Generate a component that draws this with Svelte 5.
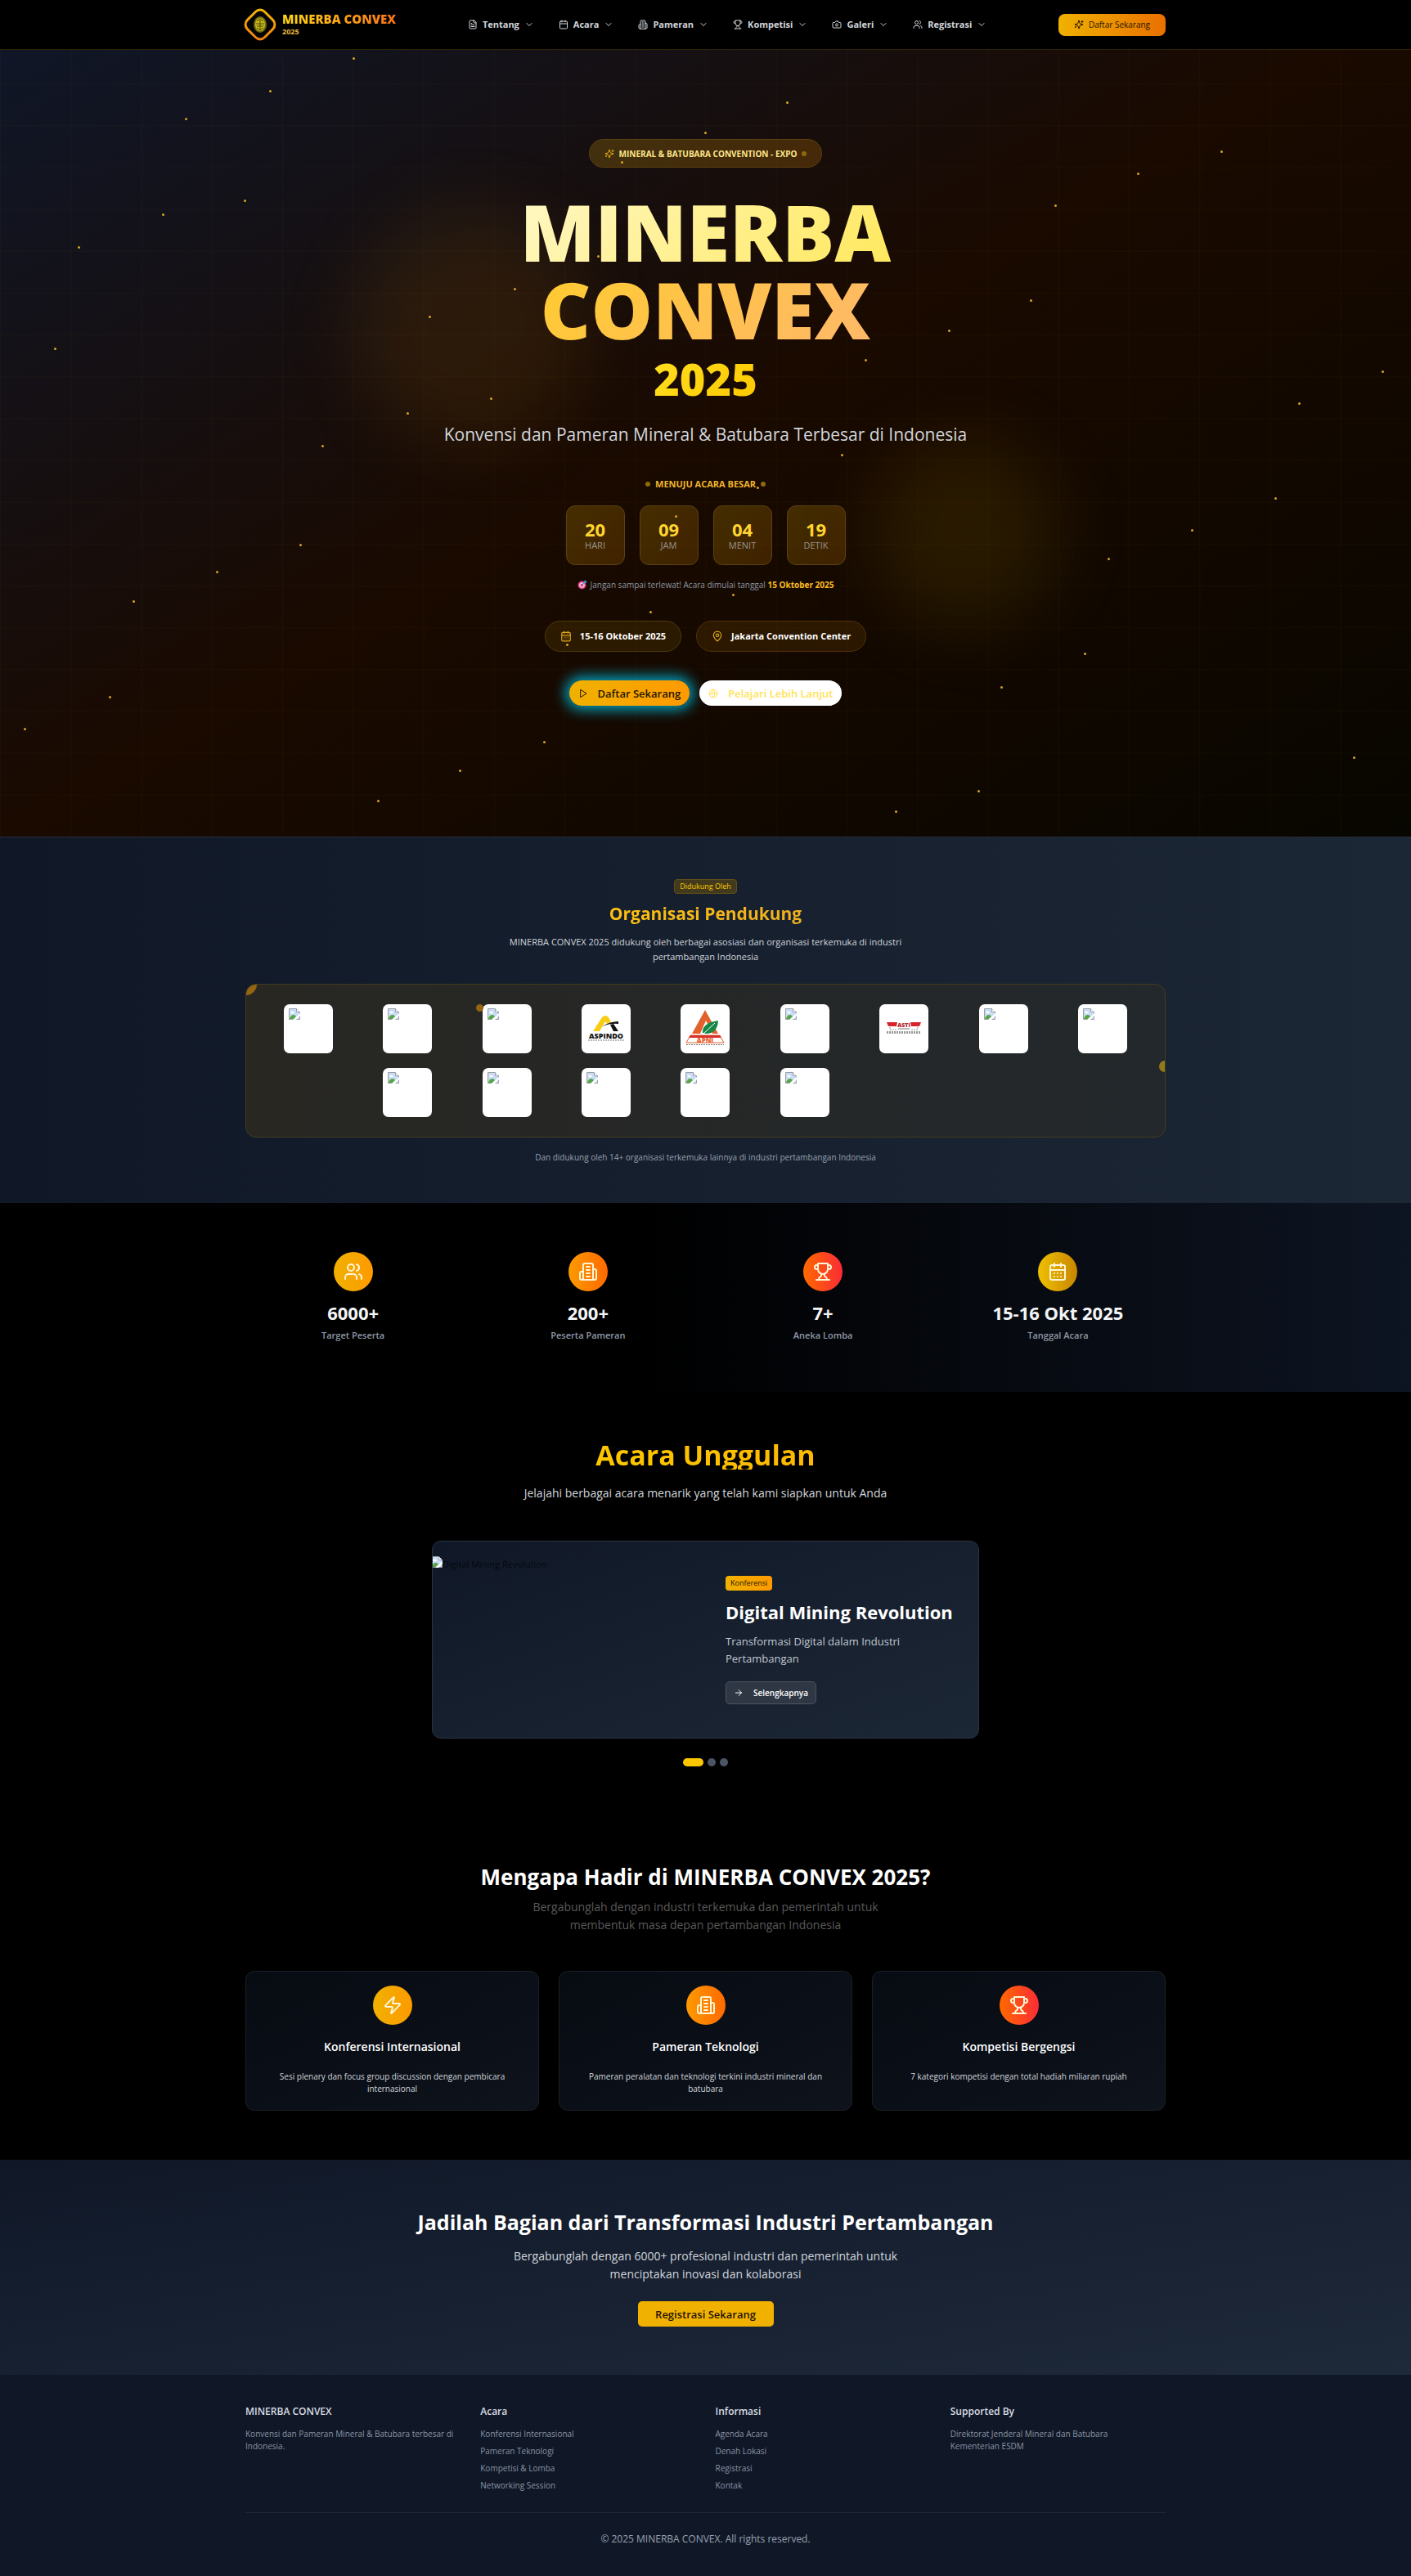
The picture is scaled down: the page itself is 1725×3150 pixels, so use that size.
<script>
  const icons = {
    file: ['M15 2H6a2 2 0 0 0-2 2v16a2 2 0 0 0 2 2h12a2 2 0 0 0 2-2V7Z', 'M14 2v4a2 2 0 0 0 2 2h4', 'M10 9H8', 'M16 13H8', 'M16 17H8'],
    calendar: ['M8 2v4', 'M16 2v4', 'M5 4h14a2 2 0 0 1 2 2v14a2 2 0 0 1-2 2H5a2 2 0 0 1-2-2V6a2 2 0 0 1 2-2Z', 'M3 10h18'],
    calendarDays: ['M8 2v4', 'M16 2v4', 'M5 4h14a2 2 0 0 1 2 2v14a2 2 0 0 1-2 2H5a2 2 0 0 1-2-2V6a2 2 0 0 1 2-2Z', 'M3 10h18', 'M8 14h.01', 'M12 14h.01', 'M16 14h.01', 'M8 18h.01', 'M12 18h.01', 'M16 18h.01'],
    building: ['M6 22V4a2 2 0 0 1 2-2h8a2 2 0 0 1 2 2v18Z', 'M6 12H4a2 2 0 0 0-2 2v6a2 2 0 0 0 2 2h2', 'M18 9h2a2 2 0 0 1 2 2v9a2 2 0 0 1-2 2h-2', 'M10 6h4', 'M10 10h4', 'M10 14h4', 'M10 18h4'],
    trophy: ['M6 9H4.5a2.5 2.5 0 0 1 0-5H6', 'M18 9h1.5a2.5 2.5 0 0 0 0-5H18', 'M4 22h16', 'M10 14.66V17c0 .55-.47.98-.97 1.21C7.85 18.75 7 20.24 7 22', 'M14 14.66V17c0 .55.47.98.97 1.21C16.15 18.75 17 20.24 17 22', 'M18 2H6v7a6 6 0 0 0 12 0V2Z'],
    camera: ['M14.5 4h-5L7 7H4a2 2 0 0 0-2 2v9a2 2 0 0 0 2 2h16a2 2 0 0 0 2-2V9a2 2 0 0 0-2-2h-3l-2.5-3z', 'M12 10a3 3 0 1 0 0 6a3 3 0 1 0 0-6'],
    users: ['M16 21v-2a4 4 0 0 0-4-4H6a4 4 0 0 0-4 4v2', 'M9 3a4 4 0 1 0 0 8a4 4 0 1 0 0-8', 'M22 21v-2a4 4 0 0 0-3-3.87', 'M16 3.13a4 4 0 0 1 0 7.75'],
    sparkles: ['M9.937 15.5A2 2 0 0 0 8.5 14.063l-6.135-1.582a.5.5 0 0 1 0-.962L8.5 9.936A2 2 0 0 0 9.937 8.5l1.582-6.135a.5.5 0 0 1 .963 0L14.063 8.5A2 2 0 0 0 15.5 9.937l6.135 1.581a.5.5 0 0 1 0 .964L15.5 14.063a2 2 0 0 0-1.437 1.437l-1.582 6.135a.5.5 0 0 1-.963 0z', 'M20 3v4', 'M22 5h-4', 'M4 17v2', 'M5 18H3'],
    pin: ['M20 10c0 4.993-5.539 10.193-7.399 11.799a1 1 0 0 1-1.202 0C9.539 20.193 4 14.993 4 10a8 8 0 0 1 16 0', 'M12 7a3 3 0 1 0 0 6a3 3 0 1 0 0-6'],
    play: ['M6 3l14 9l-14 9z'],
    globe: ['M12 2a10 10 0 1 0 0 20a10 10 0 1 0 0-20', 'M12 2a14.5 14.5 0 0 0 0 20a14.5 14.5 0 0 0 0-20', 'M2 12h20'],
    zap: ['M4 14a1 1 0 0 1-.78-1.63l9.9-10.2a.5.5 0 0 1 .86.46l-1.92 6.02A1 1 0 0 0 13 10h7a1 1 0 0 1 .78 1.63l-9.9 10.2a.5.5 0 0 1-.86-.46l1.92-6.02A1 1 0 0 0 11 14z'],
    arrow: ['M5 12h14', 'M12 5l7 7l-7 7'],
    chevron: ['M6 9l6 6l6-6']
  };

  const nav = [
    { label: 'Tentang', icon: 'file' },
    { label: 'Acara', icon: 'calendar' },
    { label: 'Pameran', icon: 'building' },
    { label: 'Kompetisi', icon: 'trophy' },
    { label: 'Galeri', icon: 'camera' },
    { label: 'Registrasi', icon: 'users' }
  ];

  // Positions of the glowing dust, in percent of the hero area.
  const dust = [
    [25, 0.9], [19.1, 5.1], [55.7, 6.6], [13.1, 8.6], [49.9, 10.4], [86.5, 12.8], [44, 14.1], [80.6, 15.6],
    [17.3, 19], [74.7, 19.6], [11.5, 20.8], [5.5, 24.9], [42.3, 26.1], [36.4, 30.3], [73, 31.7], [30.4, 33.8],
    [67.2, 35.6], [3.8, 37.8], [61.3, 39.3], [97.9, 40.8], [34.7, 44.2], [92, 44.8], [28.8, 46], [22.8, 50.2],
    [59.6, 51.3], [53.6, 55.5], [90.3, 56.9], [47.8, 59.1], [84.4, 60.9], [21.2, 62.8], [78.5, 64.6],
    [15.3, 66.2], [51.9, 69.1], [9.4, 70], [46, 71.3], [40.1, 75.5], [76.8, 76.6], [70.9, 80.9], [7.7, 82.1],
    [1.7, 86.2], [38.5, 87.8], [95.9, 89.8], [32.5, 91.5], [69.3, 94.1], [26.7, 95.3], [63.4, 96.7]
  ];

  const countdown = [
    { value: '20', unit: 'HARI' },
    { value: '09', unit: 'JAM' },
    { value: '04', unit: 'MENIT' },
    { value: '19', unit: 'DETIK' }
  ];

  const partners = [
    ['', '', '', 'aspindo', 'apni', '', 'asti', '', ''],
    ['', '', '', '', '']
  ];

  const stats = [
    { value: '6000+', label: 'Target Peserta', icon: 'users', tone: 'amber' },
    { value: '200+', label: 'Peserta Pameran', icon: 'building', tone: 'orange' },
    { value: '7+', label: 'Aneka Lomba', icon: 'trophy', tone: 'red' },
    { value: '15-16 Okt 2025', label: 'Tanggal Acara', icon: 'calendarDays', tone: 'ochre' }
  ];

  const reasons = [
    { title: 'Konferensi Internasional', text: 'Sesi plenary dan focus group discussion dengan pembicara internasional', icon: 'zap', tone: 'amber' },
    { title: 'Pameran Teknologi', text: 'Pameran peralatan dan teknologi terkini industri mineral dan batubara', icon: 'building', tone: 'orange' },
    { title: 'Kompetisi Bergengsi', text: '7 kategori kompetisi dengan total hadiah miliaran rupiah', icon: 'trophy', tone: 'red' }
  ];

  const footerLinks = [
    { title: 'Acara', links: ['Konferensi Internasional', 'Pameran Teknologi', 'Kompetisi & Lomba', 'Networking Session'] },
    { title: 'Informasi', links: ['Agenda Acara', 'Denah Lokasi', 'Registrasi', 'Kontak'] }
  ];

  let slide = $state(0);
</script>

{#snippet icon(name, size)}
  <svg class="icon {size}" viewBox="0 0 24 24" aria-hidden="true">
    {#each icons[name] as d}<path {d} />{/each}
  </svg>
{/snippet}

{#snippet missing()}
  <svg class="missing" viewBox="0 0 14 14" aria-hidden="true">
    <path d="M.5.5h9l4 4v9H.5z" fill="#c9dcf8" stroke="#9a9fa5" />
    <path d="M9.5.5v4h4" fill="#fff" stroke="#9a9fa5" />
    <ellipse cx="4.5" cy="5" rx="2.2" ry="1.3" fill="#fff" />
    <path d="M1 13c1-4 3-5 5-5c1.5 0 2.5 1 3 2l-3 3z" fill="#55a743" />
    <path d="M5 14l9-8v3l-5 5z" fill="#fff" />
  </svg>
{/snippet}

<header>
  <div class="wrap bar">
    <a class="brand" href="#home">
      <svg class="mark" viewBox="0 0 42 42" aria-hidden="true">
        <defs>
          <linearGradient id="ring" x1="0" y1="0" x2="1" y2="1">
            <stop offset="0" stop-color="#f5b800" />
            <stop offset="1" stop-color="#ef7d13" />
          </linearGradient>
        </defs>
        <rect x="6" y="6" width="30" height="30" rx="8" transform="rotate(45 21 21)" fill="#050505" stroke="url(#ring)" stroke-width="3" />
        <ellipse cx="21" cy="21" rx="8" ry="10" fill="#6b6a10" />
        <ellipse cx="21" cy="21" rx="6" ry="8" fill="#c9b715" />
        <path d="M17 17l4-3l4 3M16 20h10M17 23h8M17 25l4 3l4-3M21 15v12" fill="none" stroke="#4a4a0c" />
      </svg>
      <span class="brand-text"><b>MINERBA CONVEX</b><small>2025</small></span>
    </a>
    <nav>
      {#each nav as item}
        <button class="nav-item" type="button">
          {@render icon(item.icon, 's12')}<span>{item.label}</span>{@render icon('chevron', 's12')}
        </button>
      {/each}
    </nav>
    <a class="register" href="#daftar">{@render icon('sparkles', 's12')}Daftar Sekarang</a>
  </div>
</header>

<main>
  <section class="hero" id="home">
    <div class="blob left"></div>
    <div class="blob right"></div>
    <div class="hero-body">
      <p class="tagbadge">{@render icon('sparkles', 's12')}MINERAL &amp; BATUBARA CONVENTION - EXPO<i class="dot"></i></p>
      <h1><span class="t1">MINERBA</span><span class="t2">CONVEX</span><span class="t3">2025</span></h1>
      <p class="lead">Konvensi dan Pameran Mineral &amp; Batubara Terbesar di Indonesia</p>
      <p class="soon"><i class="dot"></i>MENUJU ACARA BESAR<i class="dot"></i></p>
      <div class="countdown">
        {#each countdown as c}
          <div class="cell"><b>{c.value}</b><span>{c.unit}</span></div>
        {/each}
      </div>
      <p class="remind">
        <svg class="icon-target" viewBox="0 0 12 12" aria-hidden="true">
          <circle cx="5.5" cy="6.5" r="5" fill="#d9417a" />
          <circle cx="5.5" cy="6.5" r="3.3" fill="#f6c6dc" />
          <circle cx="5.5" cy="6.5" r="1.8" fill="#d9417a" />
          <path d="M5.5 6.5L9 3" stroke="#3b82f6" stroke-width="1" />
          <path d="M8 2l2-2v2h2l-2 2H8z" fill="#3b9df6" />
        </svg>
        <span>Jangan sampai terlewat! Acara dimulai tanggal <b>15 Oktober 2025</b></span>
      </p>
      <div class="facts">
        <p class="fact">{@render icon('calendarDays', 's14')}15-16 Oktober 2025</p>
        <p class="fact warm">{@render icon('pin', 's14')}Jakarta Convention Center</p>
      </div>
      <div class="actions">
        <button class="go" type="button">{@render icon('play', 's12')}Daftar Sekarang</button>
        <button class="more" type="button">{@render icon('globe', 's12')}Pelajari Lebih Lanjut</button>
      </div>
    </div>
    <div class="dust">
      {#each dust as [x, y]}<i style="left:{x}%;top:{y}%"></i>{/each}
    </div>
  </section>

  <section class="support">
    <div class="wrap stack">
      <span class="chip">Didukung Oleh</span>
      <h2 class="gold">Organisasi Pendukung</h2>
      <p class="support-text">MINERBA CONVEX 2025 didukung oleh berbagai asosiasi dan organisasi terkemuka di industri pertambangan Indonesia</p>
      <div class="panel">
        <i class="bubble b1"></i><i class="bubble b2"></i><i class="bubble b3"></i>
        {#each partners as row, r}
          {#each row as logo, c}
            <div class="tile" class:second-start={r === 1 && c === 0}>
              {#if logo === 'aspindo'}
                <svg viewBox="0 0 60 60" role="img" aria-label="ASPINDO">
                  <path d="M14 33L25 16q4-4 8 0l3 6l-5 2l-2-3l-7 12z" fill="#f9cc16" />
                  <path d="M25 27q10-6 20-6v3q-10-1-20 3z" fill="#111" />
                  <path d="M35 25l4-1l6 9h-6z" fill="#111" />
                  <text x="30" y="42" class="logo-text" font-size="9" fill="#111">ASPINDO</text>
                  <path d="M8 44h45" stroke="#777" stroke-dasharray="2 1" />
                </svg>
              {:else if logo === 'apni'}
                <svg viewBox="0 0 60 60" role="img" aria-label="APNI">
                  <path d="M30 7L46 36H14z" fill="#e2612c" />
                  <path d="M31 20l8 16H24z" fill="#fff" />
                  <path d="M27 35q-1-12 19-15q-1 16-15 16z" fill="#148744" />
                  <path d="M28 36l14-13" stroke="#fff" stroke-width="1" />
                  <path d="M12 38h36l5 9H7z" fill="#fff" stroke="#e2612c" />
                  <path d="M12 38h36l2 3H10z" fill="#d8332a" />
                  <text x="30" y="47" class="logo-text" font-size="8" fill="#e8602c">APNI</text>
                  <path d="M7 49.5h46" stroke="#777" stroke-dasharray="2 1" />
                </svg>
              {:else if logo === 'asti'}
                <svg viewBox="0 0 60 60" role="img" aria-label="ASTI">
                  <path d="M9 22h13l-1 5H11zM38 22h13l-2 5H39z" fill="#d8232a" />
                  <path d="M13 28v3h8M47 28v3h-8" fill="none" stroke="#999" stroke-dasharray="2 1" />
                  <text x="30" y="28" class="logo-text" font-size="7" fill="#b3262b">ASTI</text>
                  <path d="M23 30h14" stroke="#777" />
                  <path d="M9 34.5h42" stroke="#999" stroke-width="3" stroke-dasharray="2 1" />
                </svg>
              {:else}
                {@render missing()}
              {/if}
            </div>
          {/each}
        {/each}
      </div>
      <p class="support-note">Dan didukung oleh 14+ organisasi terkemuka lainnya di industri pertambangan Indonesia</p>
    </div>
  </section>

  <section class="stats">
    <div class="wrap four">
      {#each stats as s}
        <div class="stat">
          <span class="disc {s.tone}">{@render icon(s.icon, 's24')}</span>
          <b>{s.value}</b><span class="stat-label">{s.label}</span>
        </div>
      {/each}
    </div>
  </section>

  <section class="events">
    <div class="wrap stack">
      <h2 class="events-title">Acara Unggulan</h2>
      <p class="events-text">Jelajahi berbagai acara menarik yang telah kami siapkan untuk Anda</p>
      <article class="feature">
        <div class="photo"><span class="photo-icon">{@render missing()}</span><span>Digital Mining Revolution</span></div>
        <div class="feature-body">
          <span class="kind">Konferensi</span>
          <h3>Digital Mining Revolution</h3>
          <p>Transformasi Digital dalam Industri Pertambangan</p>
          <button class="detail" type="button">{@render icon('arrow', 's12')}Selengkapnya</button>
        </div>
      </article>
      <div class="pager">
        {#each [0, 1, 2] as n}
          <button type="button" class:active={slide === n} aria-label="Slide {n + 1}" onclick={() => (slide = n)}></button>
        {/each}
      </div>
    </div>
  </section>

  <section class="why">
    <div class="wrap stack">
      <h2>Mengapa Hadir di MINERBA CONVEX 2025?</h2>
      <p class="why-text">Bergabunglah dengan industri terkemuka dan pemerintah untuk membentuk masa depan pertambangan Indonesia</p>
      <div class="three">
        {#each reasons as r}
          <article class="reason">
            <span class="disc {r.tone}">{@render icon(r.icon, 's24')}</span>
            <h3>{r.title}</h3>
            <p>{r.text}</p>
          </article>
        {/each}
      </div>
    </div>
  </section>

  <section class="cta" id="daftar">
    <div class="wrap stack">
      <h2>Jadilah Bagian dari Transformasi Industri Pertambangan</h2>
      <p>Bergabunglah dengan 6000+ profesional industri dan pemerintah untuk menciptakan inovasi dan kolaborasi</p>
      <button type="button">Registrasi Sekarang</button>
    </div>
  </section>
</main>

<footer>
  <div class="wrap">
    <div class="four columns">
      <div><h4>MINERBA CONVEX</h4><p>Konvensi dan Pameran Mineral &amp; Batubara terbesar di Indonesia.</p></div>
      {#each footerLinks as group}
        <div>
          <h4>{group.title}</h4>
          <ul>{#each group.links as link}<li><a href="#home">{link}</a></li>{/each}</ul>
        </div>
      {/each}
      <div><h4>Supported By</h4><p>Direktorat Jenderal Mineral dan Batubara<br />Kementerian ESDM</p></div>
    </div>
    <p class="copyright">© 2025 MINERBA CONVEX. All rights reserved.</p>
  </div>
</footer>

<style>
  :global(body) { background: #000; color: #fff; font-family: "Open Sans", "Noto Sans", sans-serif; font-size: 12px; line-height: 18px; }
  :global(*) { box-sizing: border-box; }
  h1, h2, h3, h4, p, ul { margin: 0; padding: 0; }
  ul { list-style: none; }
  a { color: inherit; text-decoration: none; }
  button { border: 0; background: none; color: inherit; font: inherit; padding: 0; cursor: pointer; }
  i { display: block; }
  .wrap { width: min(1125px, 100% - 48px); margin: 0 auto; }
  .stack { display: flex; flex-direction: column; align-items: center; text-align: center; }
  .icon { flex: none; fill: none; stroke: currentColor; stroke-width: 2; stroke-linecap: round; stroke-linejoin: round; }
  .s12 { width: 12px; height: 12px; }
  .s14 { width: 14px; height: 14px; }
  .s24 { width: 24px; height: 24px; }
  .missing { display: block; flex: none; width: 14px; height: 14px; }

  header { position: fixed; inset: 0 0 auto; z-index: 5; background: #000; border-bottom: 1px solid #2e2304; }
  .bar { display: flex; align-items: center; justify-content: space-between; height: 60px; }
  .brand { display: flex; align-items: center; gap: 6px; margin-left: -3px; }
  .mark { width: 42px; height: 42px; }
  .brand-text { display: flex; flex-direction: column; }
  .brand-text b { font-size: 15px; line-height: 18px; font-weight: 800; background: linear-gradient(90deg, #fdd817, #f97316); background-clip: text; color: transparent; }
  .brand-text small { font-size: 9px; line-height: 14px; font-weight: 700; color: #e3b93a; }
  nav { display: flex; gap: 30px; }
  .nav-item { display: flex; align-items: center; gap: 6px; color: #d1d5dc; font-size: 11px; line-height: 18px; font-weight: 700; }
  .register { display: flex; align-items: center; justify-content: center; gap: 6px; width: 131px; height: 27px; border-radius: 8px; background: linear-gradient(90deg, #f0b100, #e97000); color: #241500; font-size: 10px; font-weight: 500; }

  .hero { position: relative; overflow: hidden; background: linear-gradient(to bottom right, #0f172a 0%, #1a0a00 50%, #080600 100%); }
  .hero::before { content: ""; position: absolute; inset: 0; background-image: linear-gradient(90deg, rgba(240, 177, 0, 0.03) 1px, transparent 1px), linear-gradient(rgba(240, 177, 0, 0.03) 1px, transparent 1px); background-size: 5% 5%; }
  .blob { position: absolute; border-radius: 50%; filter: blur(44px); }
  .blob.left { left: 25%; top: 25%; width: 288px; height: 288px; background: rgba(254, 154, 0, 0.09); }
  .blob.right { right: 25%; bottom: 25%; width: 230px; height: 230px; background: rgba(208, 160, 0, 0.11); }
  .dust { position: absolute; inset: 61px 0 0; pointer-events: none; }
  .dust i { position: absolute; width: 3px; height: 3px; border-radius: 50%; background: #dba520; }
  .hero-body { position: relative; display: flex; flex-direction: column; align-items: center; padding: 170px 24px 160px; }
  .dot { width: 6px; height: 6px; border-radius: 50%; background: #8d6a0c; }
  .tagbadge { display: flex; align-items: center; gap: 6px; height: 35px; padding: 0 18px; border: 1px solid #5a4010; border-radius: 18px; background: linear-gradient(90deg, rgba(240, 177, 0, 0.2), rgba(254, 154, 0, 0.2)); color: #fde68a; font-size: 10px; font-weight: 700; }
  .tagbadge :global(.icon) { color: #e5ae14; }
  h1 { display: flex; flex-direction: column; align-items: center; margin-top: 31px; font-weight: 800; font-size: 95px; line-height: 95px; }
  h1 span { background-clip: text; color: transparent; }
  .t1 { background-image: linear-gradient(135deg, #fff8c4, #ffe85c); }
  .t2 { background-image: linear-gradient(135deg, #ffcb30, #ffb86a); }
  .t3 { margin-top: 10px; font-size: 54px; line-height: 54px; background-image: linear-gradient(135deg, #ffe020, #fdc700); }
  .lead { margin-top: 26px; color: #d1d5dc; font-size: 21px; line-height: 30px; text-align: center; }
  .soon { display: flex; align-items: center; gap: 6px; margin-top: 38px; color: #f0b428; font-size: 11px; line-height: 16px; font-weight: 700; }
  .countdown { display: flex; gap: 18px; margin-top: 18px; }
  .cell { display: flex; flex-direction: column; align-items: center; justify-content: center; width: 72px; height: 73px; border: 1px solid #5c4310; border-radius: 11px; background: linear-gradient(135deg, rgba(208, 160, 0, 0.24), rgba(225, 130, 0, 0.2)); }
  .cell b { color: #ffd52e; font-size: 22px; line-height: 24px; }
  .cell span { color: #99948c; font-size: 11px; line-height: 16px; font-weight: 500; }
  .remind { display: flex; align-items: center; gap: 4px; margin-top: 16px; color: #8b93a1; font-size: 10px; line-height: 16px; }
  .remind b { color: #fcbb20; font-weight: 700; }
  .icon-target { width: 12px; height: 12px; }
  .facts { display: flex; flex-wrap: wrap; justify-content: center; gap: 18px; margin-top: 36px; }
  .fact { display: flex; align-items: center; gap: 10px; height: 38px; padding: 0 18px; border: 1px solid #4b3a10; border-radius: 19px; background: rgba(240, 177, 0, 0.1); font-size: 11px; font-weight: 700; }
  .fact :global(.icon) { color: #e0a81c; }
  .fact.warm { border-color: #53300a; background: rgba(254, 154, 0, 0.1); }
  .actions { display: flex; flex-wrap: wrap; gap: 12px; margin-top: 35px; }
  .actions button { display: flex; align-items: center; gap: 12px; height: 31px; padding: 0 11px; border-radius: 16px; font-size: 13px; font-weight: 600; }
  .actions .go { background: linear-gradient(90deg, #f0b100, #fe9a00); color: #241500; box-shadow: 0 0 16px 5px rgba(0, 184, 219, 0.85); }
  .actions .more { background: #fff; color: #ffe256; }

  .support { padding: 51px 0 48px; border-top: 1px solid #252b38; background: linear-gradient(90deg, #101828, #1c2735); }
  .chip { height: 18px; padding: 0 6px; border: 1px solid #5e4e18; border-radius: 4px; background: #433a1d; color: #fcc800; font-size: 9px; line-height: 16px; font-weight: 500; }
  .gold { margin-top: 8px; color: transparent; background: linear-gradient(90deg, #fdc010, #efb020); background-clip: text; font-size: 21px; line-height: 32px; }
  .support-text { max-width: 518px; margin-top: 10px; color: #d1d5dc; font-size: 11px; line-height: 18px; }
  .panel { position: relative; overflow: hidden; display: grid; grid-template-columns: repeat(9, 1fr); gap: 18px; justify-items: center; width: 100%; margin-top: 24px; padding: 24px; border: 1px solid #423c1d; border-radius: 13px; background: linear-gradient(90deg, #282722, #23282c); }
  .tile { display: flex; width: 60px; height: 60px; border-radius: 7px; background: #fff; }
  .tile :global(.missing) { margin: 5px 6px; }
  .second-start { grid-column: 2; }
  .logo-text { font-family: "Open Sans", sans-serif; font-weight: 800; text-anchor: middle; }
  .bubble { position: absolute; border-radius: 50%; background: #936512; }
  .b1 { left: -14px; top: -14px; width: 27px; height: 27px; }
  .b2 { left: 25%; top: 24px; width: 9px; height: 9px; }
  .b3 { right: -7px; top: 50%; width: 14px; height: 14px; background: #93791a; }
  .support-note { margin-top: 16px; color: #99a1af; font-size: 10px; line-height: 16px; }

  .four { display: grid; grid-template-columns: repeat(4, 1fr); gap: 24px; }
  .stats { padding: 60px 0; background: linear-gradient(90deg, #000 45%, #101828 110%); }
  .stat { display: flex; flex-direction: column; align-items: center; }
  .stat b { margin-top: 11px; font-size: 22px; line-height: 30px; color: #f3f4f6; }
  .stat-label { margin-top: 4px; color: #8f97a5; font-size: 11px; font-weight: 600; }
  .disc { display: grid; place-items: center; width: 48px; height: 48px; border-radius: 50%; color: #fff6d8; }
  .amber { background: linear-gradient(90deg, #f0b100, #fe9a00); }
  .orange { background: linear-gradient(90deg, #fe9a00, #ff6900); }
  .red { background: linear-gradient(90deg, #ff6900, #fb2c36); }
  .ochre { background: linear-gradient(90deg, #f0c000, #c88600); }

  .events { padding: 59px 0 58px; }
  .events-title { background: linear-gradient(90deg, #fdc700, #fcb900); background-clip: text; color: transparent; font-size: 34px; line-height: 36px; }
  .events-text { margin-top: 17px; color: #d1d5dc; font-size: 14px; line-height: 24px; }
  .feature { display: grid; grid-template-columns: 358px 1fr; width: 100%; max-width: 669px; min-height: 242px; margin-top: 46px; border: 1px solid #2a333f; border-radius: 11px; background: linear-gradient(to bottom right, #101828, #1c2735); text-align: left; }
  .photo { display: flex; align-items: flex-start; padding-top: 18px; color: #05070c; font-size: 11px; line-height: 20px; }
  .photo-icon { display: flex; width: 12px; overflow: hidden; justify-content: flex-end; }
  .feature-body { display: flex; flex-direction: column; align-items: flex-start; justify-content: center; padding-right: 32px; }
  .kind { height: 18px; padding: 0 6px; border-radius: 4px; background: linear-gradient(90deg, #f0b100, #fe9a00); color: #241500; font-size: 9px; line-height: 18px; }
  .feature h3 { margin-top: 11px; font-size: 22px; line-height: 30px; white-space: nowrap; }
  .feature p { margin-top: 11px; color: #c3c8d0; font-size: 13px; line-height: 21px; }
  .detail { display: flex; align-items: center; gap: 12px; height: 28px; margin-top: 17px; padding: 0 9px; border: 1px solid #4a5260; border-radius: 5px; background: #2f3744; font-size: 10px; font-weight: 600; }
  .pager { display: flex; gap: 5px; margin-top: 24px; }
  .pager button { width: 10px; height: 10px; border-radius: 5px; background: #4a5565; }
  .pager .active { width: 25px; background: #fdc700; }

  .why { padding: 59px 0 60px; }
  .why h2 { font-size: 26px; line-height: 36px; }
  .why-text { max-width: 460px; margin-top: 8px; color: #5a5a5a; font-size: 14px; line-height: 22px; }
  .three { display: grid; grid-template-columns: repeat(3, 1fr); gap: 24px; width: 100%; margin-top: 45px; }
  .reason { display: flex; flex-direction: column; align-items: center; padding: 17px 24px 18px; border: 1px solid #1a1f28; border-radius: 11px; background: linear-gradient(to bottom right, #070b12, #0e131c); }
  .reason h3 { margin-top: 16px; font-size: 14px; line-height: 22px; font-weight: 600; }
  .reason p { margin-top: 18px; color: #d1d5dc; font-size: 10px; line-height: 15px; }

  .cta { padding: 58px 0 59px; background: linear-gradient(to bottom right, #101828, #1e2939); }
  .cta h2 { font-size: 25px; line-height: 36px; }
  .cta p { max-width: 518px; margin-top: 13px; color: #d1d5dc; font-size: 14px; line-height: 22px; }
  .cta button { width: 166px; height: 31px; margin-top: 22px; border-radius: 5px; background: #f0b100; color: #241500; font-size: 13px; font-weight: 600; }

  footer { padding: 36px 0; background: #101828; }
  .columns h4 { color: #d8dce2; font-size: 12px; line-height: 18px; font-weight: 600; }
  .columns p, .columns ul { margin-top: 11px; color: #8a93a2; font-size: 10px; line-height: 15px; }
  .columns ul { display: flex; flex-direction: column; gap: 6px; }
  .copyright { margin-top: 25px; padding-top: 23px; border-top: 1px solid #1e2939; color: #99a1af; text-align: center; }
</style>
